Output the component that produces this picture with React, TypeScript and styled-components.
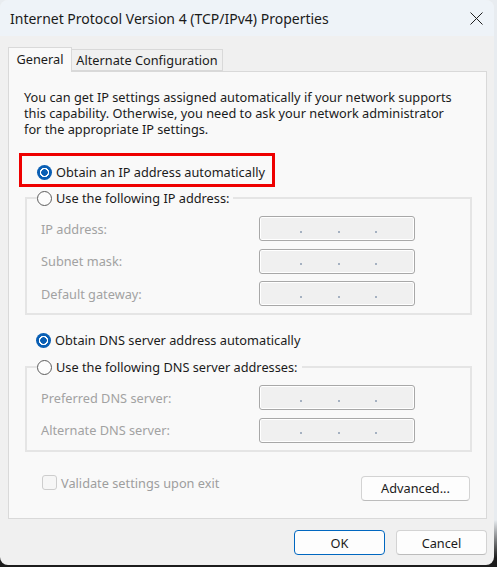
import React from "react";
import styled, { createGlobalStyle } from "styled-components";

const Global = createGlobalStyle`
  html, body { margin: 0; padding: 0; }
  body {
    width: 497px;
    height: 567px;
    overflow: hidden;
    background: linear-gradient(to bottom, #e8ecf0 0, #e8ecf0 520px, #1c1c1c 558px);
    font-family: "Noto Sans", "Open Sans", sans-serif;
    font-size: 12.75px;
    color: #1b1b1b;
  }
`;

const Window = styled.div`
  width: 494px;
  height: 565px;
  border-radius: 8px;
  overflow: hidden;
  background: #f0f0f0;
  display: flex;
  flex-direction: column;
`;

const TitleBar = styled.div`
  height: 36px;
  flex: none;
  background: #eef3f8;
  display: flex;
  align-items: center;
  justify-content: space-between;
  padding-left: 10px;
`;

const TitleText = styled.div`
  font-size: 14px;
  color: #1a1a1a;
`;

const CloseBtn = styled.div`
  width: 36px;
  height: 36px;
  display: flex;
  align-items: center;
  justify-content: center;
`;

const Body = styled.div`
  flex: 1;
  display: flex;
  flex-direction: column;
  padding: 11px 7px 0 8px;
`;

const TabStrip = styled.div`
  height: 24px;
  display: flex;
  align-items: flex-end;
  position: relative;
  z-index: 1;
`;

const Tab = styled.div<{ $active?: boolean; $w: number }>`
  box-sizing: border-box;
  width: ${(p) => p.$w}px;
  height: ${(p) => (p.$active ? 25 : 22)}px;
  margin-bottom: ${(p) => (p.$active ? -1 : 0)}px;
  border: 1px solid #d9d9d9;
  border-bottom: ${(p) => (p.$active ? "none" : "1px solid #d9d9d9")};
  ${(p) => (p.$active ? "" : "border-left: none;")}
  background: ${(p) => (p.$active ? "#f9f9f9" : "#f0f0f0")};
  display: flex;
  justify-content: center;
  padding-top: ${(p) => (p.$active ? 2 : 1)}px;
  line-height: 18px;
  color: #1b1b1b;
  white-space: nowrap;
`;

const Panel = styled.div`
  box-sizing: border-box;
  height: 448px;
  border: 1px solid #d9d9d9;
  background: #f9f9f9;
  padding: 17px 15px 0 15px;
  display: flex;
  flex-direction: column;
`;

const Description = styled.p`
  margin: 0;
  line-height: 16px;
  white-space: nowrap;
`;

const Highlight = styled.div`
  box-sizing: border-box;
  margin: 16px 0 0 -5px;
  width: 256px;
  height: 34px;
  border: 3px solid #ee0000;
  padding: 8px 0 0 15px;
`;

const RadioRow = styled.label<{ $indent?: number; $top?: number }>`
  display: flex;
  align-items: center;
  height: 16px;
  gap: 4px;
  margin-left: ${(p) => p.$indent ?? 0}px;
  margin-top: ${(p) => p.$top ?? 0}px;
  color: #1b1b1b;
  white-space: nowrap;
`;

const RadioDot = styled.span<{ $checked?: boolean }>`
  box-sizing: border-box;
  flex: none;
  width: 15px;
  height: 15px;
  border-radius: 50%;
  ${(p) =>
    p.$checked
      ? `background: radial-gradient(circle, #0a5fb4 0 3px, #ffffff 3.6px 4.4px, #0a5fb4 5px);`
      : `background: #fdfdfd; border: 1px solid #5c5c5c;`}
`;

const Group = styled.fieldset<{ $top: number }>`
  box-sizing: border-box;
  margin: ${(p) => p.$top}px 0 0 1px;
  width: 447px;
  padding: 0 0 7px 14px;
  border: 2px solid #e5e5e5;
  min-inline-size: 0;
  display: flex;
  flex-direction: column;
  gap: 7.5px;
`;

const Legend = styled.legend`
  margin-left: -4px;
  padding: 0 4px 0 0;
  height: 16px;
`;

const FieldRow = styled.div<{ $first?: boolean }>`
  display: flex;
  align-items: center;
  justify-content: space-between;
  width: 374px;
  margin-top: ${(p) => (p.$first ? 10 : 0)}px;
`;

const FieldLabel = styled.span`
  color: #a2a2a2;
`;

const IpBox = styled.div`
  box-sizing: border-box;
  width: 156px;
  height: 25px;
  border: 1px solid #a8a8a8;
  border-radius: 3px;
  box-shadow: inset 0 0 0 1px #ffffff;
  background: #f0f0f0;
  display: flex;
  align-items: center;
  padding-left: 40px;
  gap: 35.5px;
`;

const Dot = styled.span`
  width: 2px;
  height: 2px;
  margin-top: 6px;
  background: #8d9db2;
  border-radius: 1px;
`;

const BottomRow = styled.div`
  margin-top: 24px;
  display: flex;
  align-items: center;
  justify-content: space-between;
  padding: 0 1px 0 18px;
`;

const CheckRow = styled.label`
  display: flex;
  align-items: center;
  gap: 4px;
  color: #9e9e9e;
  margin-top: -11px;
`;

const CheckBox = styled.span`
  box-sizing: border-box;
  width: 15px;
  height: 15px;
  border: 1px solid #cdcdcd;
  border-radius: 3px;
  background: #f6f6f6;
`;

const Button = styled.button<{ $w: number; $default?: boolean }>`
  box-sizing: border-box;
  width: ${(p) => p.$w}px;
  height: 25px;
  border: 1px solid ${(p) => (p.$default ? "#0067c0" : "#d3d3d3")};
  border-bottom-color: ${(p) => (p.$default ? "#0067c0" : "#bcbcbc")};
  border-radius: 4px;
  background: #fdfdfd;
  font-family: inherit;
  font-size: 12.75px;
  color: #1b1b1b;
  padding: 0;
  display: flex;
  align-items: center;
  justify-content: center;
`;

const Footer = styled.div`
  display: flex;
  justify-content: flex-end;
  gap: 11px;
  padding-top: 11px;
`;

function IpField({ label, first }: { label: string; first?: boolean }) {
  return (
    <FieldRow $first={first}>
      <FieldLabel>{label}</FieldLabel>
      <IpBox>
        <Dot />
        <Dot />
        <Dot />
      </IpBox>
    </FieldRow>
  );
}

export default function App() {
  return (
    <>
      <Global />
      <Window>
        <TitleBar>
          <TitleText>Internet Protocol Version 4 (TCP/IPv4) Properties</TitleText>
          <CloseBtn>
            <svg width="13" height="13" viewBox="0 0 13 13">
              <path d="M0.5 0.5 L12.5 12.5 M12.5 0.5 L0.5 12.5" stroke="#1f1f1f" strokeWidth="1" fill="none" />
            </svg>
          </CloseBtn>
        </TitleBar>
        <Body>
          <TabStrip>
            <Tab $active $w={64}>General</Tab>
            <Tab $w={151}>Alternate Configuration</Tab>
          </TabStrip>
          <Panel>
            <Description>
              You can get IP settings assigned automatically if your network supports
              <br />
              this capability. Otherwise, you need to ask your network administrator
              <br />
              for the appropriate IP settings.
            </Description>
            <Highlight>
              <RadioRow>
                <RadioDot $checked />
                Obtain an IP address automatically
              </RadioRow>
            </Highlight>
            <Group $top={3}>
              <Legend>
                <RadioRow>
                  <RadioDot />
                  Use the following IP address:
                </RadioRow>
              </Legend>
              <IpField label="IP address:" first />
              <IpField label="Subnet mask:" />
              <IpField label="Default gateway:" />
            </Group>
            <RadioRow $indent={12} $top={17}>
              <RadioDot $checked />
              Obtain DNS server address automatically
            </RadioRow>
            <Group $top={11}>
              <Legend>
                <RadioRow>
                  <RadioDot />
                  Use the following DNS server addresses:
                </RadioRow>
              </Legend>
              <IpField label="Preferred DNS server:" first />
              <IpField label="Alternate DNS server:" />
            </Group>
            <BottomRow>
              <CheckRow>
                <CheckBox />
                Validate settings upon exit
              </CheckRow>
              <Button $w={109}>Advanced...</Button>
            </BottomRow>
          </Panel>
          <Footer>
            <Button $w={91} $default>OK</Button>
            <Button $w={91}>Cancel</Button>
          </Footer>
        </Body>
      </Window>
    </>
  );
}
